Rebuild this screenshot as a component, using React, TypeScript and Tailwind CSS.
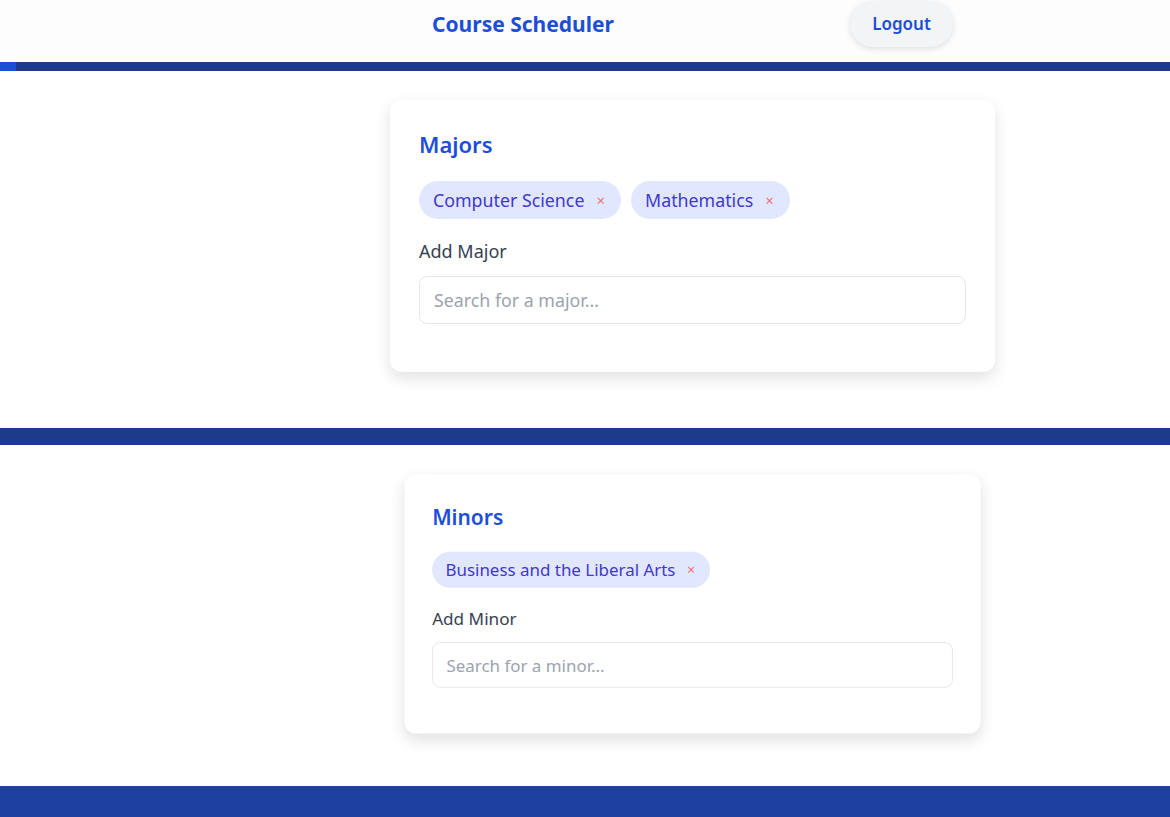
import React from "react";

function Chip({ label }: { label: string }) {
  return (
    <span className="inline-flex items-center rounded-full bg-[#e0e7ff] pl-[14px] pr-[16px] py-[7px] text-[17.8px] leading-6 text-[#4338ca]">
      {label}
      <span className="ml-[12px] text-[15px] leading-none text-[#f87171]">×</span>
    </span>
  );
}

function Card({ title, chips, label, placeholder, scaled }: { title: string; chips: string[]; label: string; placeholder: string; scaled?: boolean }) {
  return (
    <div
      className={
        "w-[605px] rounded-xl bg-white px-[29px] pt-[30px] pb-[48px] shadow-[0_6px_16px_rgba(0,0,0,0.12)] " +
        (scaled ? "scale-[0.952]" : "")
      }
    >
      <h2 className="text-[22px] font-semibold leading-7 text-[#1d4ed8]">{title}</h2>
      <div className="mt-[23px] flex flex-wrap gap-[10px]">
        {chips.map((c) => (
          <Chip key={c} label={c} />
        ))}
      </div>
      <div className="mt-[20px] text-[18px] leading-6 text-[#374151]">{label}</div>
      <input
        className="mt-[13px] block h-[48px] w-full rounded-lg border border-[#e5e7eb] bg-white px-[14px] text-[17.8px] text-[#374151] placeholder:text-[#9ca3af] outline-none"
        placeholder={placeholder}
      />
    </div>
  );
}

export default function App() {
  return (
    <div className="min-h-[817px] bg-white font-['Noto_Sans',sans-serif]">
      <header className="h-[62px] bg-[#fdfdfd]">
        <div className="flex h-full justify-center pl-[215px]">
          <div className="flex w-[521px] items-start justify-between">
            <h1 className="mt-[10px] text-[21px] font-bold leading-7 text-[#1d4ed8]">Course Scheduler</h1>
            <button className="mt-[1px] h-[46px] w-[103px] rounded-full bg-[#f3f4f6] text-[17px] font-semibold text-[#1d4ed8] shadow-[0_2px_6px_rgba(0,0,0,0.12)]">
              Logout
            </button>
          </div>
        </div>
      </header>
      <div className="flex h-[9px] bg-[#1e3a8a]">
        <div className="w-[16px] bg-[#1d4ed8]" />
      </div>
      <section className="flex justify-center pl-[215px] pt-[29px] pb-[56px]">
        <Card
          title="Majors"
          chips={["Computer Science", "Mathematics"]}
          label="Add Major"
          placeholder="Search for a major..."
        />
      </section>
      <div className="h-[17px] bg-[#1e3a8a]" />
      <section className="flex justify-center pl-[215px] pt-[23px] pb-[46px]">
        <Card
          title="Minors"
          chips={["Business and the Liberal Arts"]}
          label="Add Minor"
          placeholder="Search for a minor..."
          scaled
        />
      </section>
      <div className="h-[40px] bg-[#1e40a0]" />
    </div>
  );
}
